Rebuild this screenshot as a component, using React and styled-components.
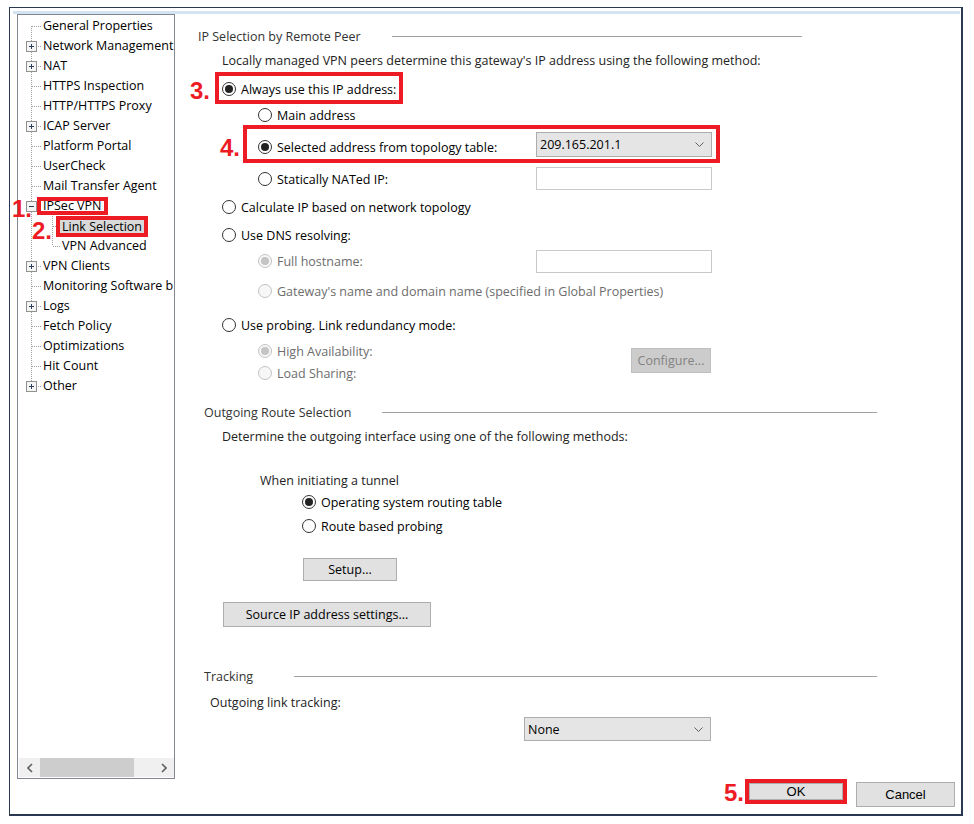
import styled, { createGlobalStyle } from "styled-components";

const GlobalStyle = createGlobalStyle`
  html, body {
    margin: 0;
    padding: 0;
    background: #fff;
  }
  body {
    font-family: "Open Sans", "Noto Sans", sans-serif;
    font-size: 12.5px;
    color: #000;
  }
  * {
    box-sizing: border-box;
  }
`;

const treeItems = [
  { label: "General Properties", first: true },
  { label: "Network Management", expander: "plus" },
  { label: "NAT", expander: "plus" },
  { label: "HTTPS Inspection" },
  { label: "HTTP/HTTPS Proxy" },
  { label: "ICAP Server", expander: "plus" },
  { label: "Platform Portal" },
  { label: "UserCheck" },
  { label: "Mail Transfer Agent" },
  { label: "IPSec VPN", expander: "minus", boxed: 10, mark: "1.", markLeft: -6, markTop: 1 },
  { label: "Link Selection", child: true, selected: true, boxed: 13, mark: "2.", markLeft: 14, markTop: 3 },
  { label: "VPN Advanced", child: true, lastChild: true },
  { label: "VPN Clients", expander: "plus" },
  { label: "Monitoring Software b" },
  { label: "Logs", expander: "plus" },
  { label: "Fetch Policy" },
  { label: "Optimizations" },
  { label: "Hit Count" },
  { label: "Other", expander: "plus", last: true },
];

function Connector({ item }) {
  const dots = { stroke: "#a0a0a0", strokeDasharray: "1 1" };
  return (
    <ConnectorSvg width={item.child ? 42 : 23} height="20">
      <line x1="13.5" y1={item.first ? 10 : 0} x2="13.5" y2={item.last ? 10 : 20} {...dots} />
      {!item.child && <line x1={item.expander ? 18 : 14} y1="10.5" x2="23" y2="10.5" {...dots} />}
      {item.child && (
        <>
          <line x1="34.5" y1="0" x2="34.5" y2={item.lastChild ? 10 : 20} {...dots} />
          <line x1="35" y1="10.5" x2="42" y2="10.5" {...dots} />
        </>
      )}
      {item.expander && (
        <g>
          <rect x="8.5" y="5.5" width="10" height="10" fill="#f4f4f4" stroke="#919191" />
          <line x1="11" y1="10.5" x2="16" y2="10.5" stroke="#2a3d5c" />
          {item.expander === "plus" && <line x1="13.5" y1="8" x2="13.5" y2="13" stroke="#2a3d5c" />}
        </g>
      )}
    </ConnectorSvg>
  );
}

function Radio({ checked, disabled, w, dy, children }) {
  return (
    <RadioLabel $w={w} $dy={dy} $disabled={disabled}>
      <RadioCircle $checked={checked} $disabled={disabled} />
      <span>{children}</span>
    </RadioLabel>
  );
}

function Chevron() {
  return (
    <svg width="9" height="5" viewBox="0 0 9 5">
      <polyline points="0.5,0.5 4.5,4.5 8.5,0.5" fill="none" stroke="#606060" strokeWidth="1" />
    </svg>
  );
}

function Arrow({ dir }) {
  return (
    <svg width="6" height="10" viewBox="0 0 6 10">
      <polyline
        points={dir === "left" ? "5,1 1,5 5,9" : "1,1 5,5 1,9"}
        fill="none"
        stroke="#606060"
        strokeWidth="1.6"
      />
    </svg>
  );
}

function App() {
  return (
    <>
      <GlobalStyle />
      <Window>
        <TopStrip />
        <Body>
          <TreePanel>
            <TreeList>
              {treeItems.map((item) => (
                <TreeRow key={item.label}>
                  <Connector item={item} />
                  <TreeLabel $selected={item.selected} $boxed={item.boxed}>
                    {item.label}
                  </TreeLabel>
                  {item.mark && (
                    <TreeMark $left={item.markLeft} $top={item.markTop}>
                      {item.mark}
                    </TreeMark>
                  )}
                </TreeRow>
              ))}
            </TreeList>
            <Scrollbar>
              <ScrollArrow>
                <Arrow dir="left" />
              </ScrollArrow>
              <ScrollThumb />
              <ScrollTrack />
              <ScrollArrow>
                <Arrow dir="right" />
              </ScrollArrow>
            </Scrollbar>
          </TreePanel>

          <Content>
            <Row $mt={12} $indent={23}>
              <SectionTitle $w={194}>IP Selection by Remote Peer</SectionTitle>
              <Rule $w={410} />
            </Row>
            <Row $mt={4} $indent={47}>
              <Text>
                Locally managed VPN peers determine this gateway's IP address using the following
                method:
              </Text>
            </Row>
            <Row $mt={2} $h={32}>
              <Mark $w={40} $pr={5} $mt={7}>
                3.
              </Mark>
              <RedBox $pad="0 3px 0 3px">
                <Radio checked dy={2}>
                  Always use this IP address:
                </Radio>
              </RedBox>
            </Row>
            <Row $mt={1} $indent={83}>
              <Radio>Main address</Radio>
            </Row>
            <Row $h={38}>
              <Mark $w={68} $pr={3} $mt={11}>
                4.
              </Mark>
              <RedBox $pad="0 4px 0 11px">
                <Radio checked w={278} dy={6}>
                  Selected address from topology table:
                </Radio>
                <Select $w={176} $h={25}>
                  <span>209.165.201.1</span>
                  <Chevron />
                </Select>
              </RedBox>
            </Row>
            <Row $mt={3} $h={24} $indent={83}>
              <Radio w={278} dy={2}>
                Statically NATed IP:
              </Radio>
              <TextField $w={176} $h={23} />
            </Row>
            <Row $mt={7} $indent={47}>
              <Radio>Calculate IP based on network topology</Radio>
            </Row>
            <Row $mt={8} $indent={47}>
              <Radio>Use DNS resolving:</Radio>
            </Row>
            <Row $mt={4} $h={24} $indent={83}>
              <Radio checked disabled w={278}>
                Full hostname:
              </Radio>
              <TextField $w={176} $h={23} />
            </Row>
            <Row $mt={8} $indent={83}>
              <Radio disabled>Gateway's name and domain name (specified in Global Properties)</Radio>
            </Row>
            <Row $mt={14} $indent={47}>
              <Radio>Use probing. Link redundancy mode:</Radio>
            </Row>
            <Row $mt={5} $h={44} $indent={83} $align="flex-start">
              <RadioColumn $w={373}>
                <SubRow>
                  <Radio checked disabled>
                    High Availability:
                  </Radio>
                </SubRow>
                <SubRow>
                  <Radio disabled>Load Sharing:</Radio>
                </SubRow>
              </RadioColumn>
              <Button disabled $w={80} $h={25} $mt={8}>
                Configure...
              </Button>
            </Row>

            <Row $mt={18} $indent={29}>
              <SectionTitle $w={178}>Outgoing Route Selection</SectionTitle>
              <Rule $w={495} />
            </Row>
            <Row $mt={4} $indent={47}>
              <Text>Determine the outgoing interface using one of the following methods:</Text>
            </Row>
            <Row $mt={24} $indent={85}>
              <Text>When initiating a tunnel</Text>
            </Row>
            <Row $mt={2} $indent={127}>
              <Radio checked>Operating system routing table</Radio>
            </Row>
            <Row $mt={4} $indent={127}>
              <Radio>Route based probing</Radio>
            </Row>
            <Row $mt={22} $h={23} $indent={128}>
              <Button $w={94} $h={23}>
                Setup...
              </Button>
            </Row>
            <Row $mt={21} $h={25} $indent={48}>
              <Button $w={208} $h={25}>
                Source IP address settings...
              </Button>
            </Row>

            <Row $mt={39} $indent={29}>
              <SectionTitle $w={90}>Tracking</SectionTitle>
              <Rule $w={583} />
            </Row>
            <Row $mt={6} $indent={35}>
              <Text>Outgoing link tracking:</Text>
            </Row>
            <Row $mt={5} $h={24} $indent={349}>
              <Select $w={187} $h={24}>
                <span>None</span>
                <Chevron />
              </Select>
            </Row>
          </Content>
        </Body>

        <Footer>
          <Mark $pr={1} $mt={2}>
            5.
          </Mark>
          <OkBox>
            <FooterButton $fill>OK</FooterButton>
          </OkBox>
          <FooterButton>Cancel</FooterButton>
        </Footer>
      </Window>
    </>
  );
}

const Window = styled.div`
  display: flex;
  flex-direction: column;
  margin: 7px 0 0 9px;
  width: 954px;
  height: 809px;
  padding: 3px 1px 0 3px;
  border: 1px solid #2b3852;
  border-right-width: 2px;
  border-bottom-width: 2px;
`;

const TopStrip = styled.div`
  height: 3px;
  flex: none;
  background: #d4e3f2;
`;

const Body = styled.div`
  display: flex;
  height: 765px;
  flex: none;
`;

const TreePanel = styled.div`
  display: flex;
  flex-direction: column;
  width: 158px;
  margin-left: 4px;
  border: 1px solid #828790;
  background: #fff;
`;

const TreeList = styled.div`
  flex: 1;
  display: flex;
  flex-direction: column;
  padding-top: 1px;
`;

const TreeRow = styled.div`
  position: relative;
  display: flex;
  align-items: center;
  height: 20px;
  flex: none;
`;

const ConnectorSvg = styled.svg`
  flex: none;
  display: block;
`;

const TreeLabel = styled.span`
  flex: 0 1 auto;
  min-width: 0;
  white-space: nowrap;
  padding: 0 2px;
  line-height: ${(p) => (p.$boxed ? `${p.$boxed}px` : "16px")};
  background: ${(p) => (p.$selected ? "#d9d9d9" : "transparent")};
  outline: ${(p) => (p.$boxed ? "4px solid #ed1c24" : "none")};
  overflow: ${(p) => (p.$boxed ? "visible" : "hidden")};
`;

const TreeMark = styled.span`
  position: absolute;
  left: ${(p) => p.$left}px;
  top: ${(p) => p.$top}px;
  color: #ed1c24;
  font: bold 24px/24px "Liberation Sans", Arial, sans-serif;
  white-space: nowrap;
`;

const Scrollbar = styled.div`
  display: flex;
  height: 19px;
  flex: none;
  margin: 0 0 1px 1px;
  background: #f0f0f0;
`;

const ScrollArrow = styled.div`
  display: flex;
  align-items: center;
  justify-content: center;
  width: 21px;
  flex: none;
`;

const ScrollThumb = styled.div`
  width: 94px;
  flex: none;
  background: #cdcdcd;
`;

const ScrollTrack = styled.div`
  flex: 1;
`;

const Content = styled.div`
  flex: 1;
  min-width: 0;
  display: flex;
  flex-direction: column;
`;

const Row = styled.div`
  display: flex;
  align-items: ${(p) => p.$align || "center"};
  height: ${(p) => p.$h || 20}px;
  margin-top: ${(p) => p.$mt || 0}px;
  padding-left: ${(p) => p.$indent || 0}px;
  flex: none;
  white-space: nowrap;
`;

const SectionTitle = styled.span`
  width: ${(p) => p.$w}px;
  flex: none;
  color: #333;
`;

const Rule = styled.div`
  width: ${(p) => p.$w}px;
  height: 1px;
  flex: none;
  background: #a0a0a0;
`;

const Text = styled.span`
  color: #222;
`;

const RadioLabel = styled.label`
  display: inline-flex;
  align-items: center;
  flex: none;
  width: ${(p) => (p.$w ? `${p.$w}px` : "auto")};
  margin-top: ${(p) => p.$dy || 0}px;
  color: ${(p) => (p.$disabled ? "#6d6d6d" : "#000")};
`;

const RadioCircle = styled.span`
  display: flex;
  align-items: center;
  justify-content: center;
  flex: none;
  width: 14px;
  height: 14px;
  margin-right: 5px;
  border-radius: 50%;
  border: 1px solid ${(p) => (p.$disabled ? "#c2c2c2" : "#333")};
  background: ${(p) => (p.$disabled ? "#f7f7f7" : "#fff")};

  &::after {
    content: "";
    display: ${(p) => (p.$checked ? "block" : "none")};
    width: 8px;
    height: 8px;
    border-radius: 50%;
    background: ${(p) => (p.$disabled ? "#c4c4c4" : "#222")};
  }
`;

const RadioColumn = styled.div`
  display: flex;
  flex-direction: column;
  width: ${(p) => p.$w}px;
  flex: none;
`;

const SubRow = styled.div`
  display: flex;
  align-items: center;
  height: 22px;
`;

const TextField = styled.div`
  width: ${(p) => p.$w}px;
  height: ${(p) => p.$h}px;
  flex: none;
  border: 1px solid #c9c9c9;
  background: #fff;
`;

const Select = styled.div`
  display: flex;
  align-items: center;
  justify-content: space-between;
  width: ${(p) => p.$w}px;
  height: ${(p) => p.$h}px;
  flex: none;
  padding: 0 7px 0 3px;
  border: 1px solid #adadad;
  background: #e5e5e5;
  color: #000;
`;

const Button = styled.button`
  width: ${(p) => p.$w}px;
  height: ${(p) => p.$h}px;
  flex: none;
  margin-top: ${(p) => p.$mt || 0}px;
  padding: 0;
  font-family: inherit;
  font-size: 12.5px;
  color: ${(p) => (p.disabled ? "#838383" : "#000")};
  background: ${(p) => (p.disabled ? "#cccccc" : "#e1e1e1")};
  border: 1px solid ${(p) => (p.disabled ? "#bfbfbf" : "#adadad")};
`;

const RedBox = styled.div`
  display: flex;
  align-items: center;
  flex: none;
  height: 100%;
  padding: ${(p) => p.$pad};
  border: 4px solid #ed1c24;
`;

const Mark = styled.span`
  flex: none;
  align-self: flex-start;
  width: ${(p) => (p.$w ? `${p.$w}px` : "auto")};
  margin-top: ${(p) => p.$mt || 0}px;
  padding-right: ${(p) => p.$pr || 0}px;
  text-align: right;
  color: #ed1c24;
  font: bold 24px/24px "Liberation Sans", Arial, sans-serif;
`;

const Footer = styled.div`
  display: flex;
  justify-content: flex-end;
  align-items: flex-start;
  flex: 1;
  padding-right: 5px;
`;

const OkBox = styled.div`
  width: 102px;
  height: 25px;
  flex: none;
  border: 4px solid #ed1c24;
`;

const FooterButton = styled.button`
  width: ${(p) => (p.$fill ? "100%" : "99px")};
  height: ${(p) => (p.$fill ? "100%" : "25px")};
  margin: ${(p) => (p.$fill ? "0" : "3px 0 0 9px")};
  padding: 0;
  font: 13px "Liberation Sans", Arial, sans-serif;
  color: #000;
  background: #e1e1e1;
  border: 1px solid #adadad;
`;

export default App;
